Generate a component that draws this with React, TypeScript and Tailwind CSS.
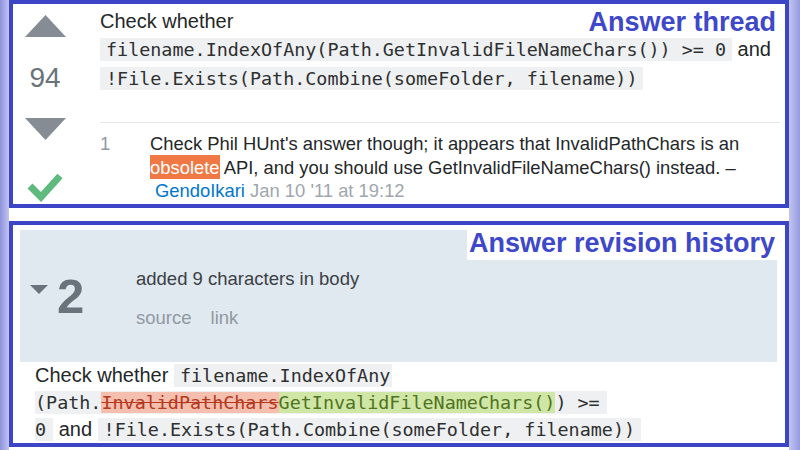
import type { ReactNode } from "react";

function Code({ children, className = "" }: { children: ReactNode; className?: string }) {
  return (
    <code
      className={`bg-[#eff0f1] py-[1px] font-['DejaVu_Sans_Mono',monospace] text-[18.4px] text-[#2d2f31] ${className}`}
    >
      {children}
    </code>
  );
}

function AnswerThread() {
  return (
    <section className="relative flex h-[208px] border-4 border-[#3b45c6]">
      {/* vote column */}
      <div className="flex w-[64px] flex-col items-center pt-[11px]">
        <svg width="41" height="22" viewBox="0 0 41 22">
          <polygon points="20.5,0 41,22 0,22" fill="#858c93" />
        </svg>
        <div className="mt-[27px] text-[28px] leading-[28px] text-[#6a737c]">94</div>
        <svg className="mt-[26px]" width="41" height="22" viewBox="0 0 41 22">
          <polygon points="0,0 41,0 20.5,22" fill="#858c93" />
        </svg>
        <svg className="mt-[30px]" width="36" height="32" viewBox="0 0 36 32">
          <path d="M3 16 L14 27 L33 6" fill="none" stroke="#5eba7d" strokeWidth="7" />
        </svg>
      </div>

      {/* post body */}
      <div className="ml-[23px] flex-1 pr-[5px] pt-[3px]">
        <div className="text-[20px] leading-[28px]">Check whether</div>
        <div className="whitespace-nowrap text-[20px] leading-[28px]">
          <Code className="px-[6px]">filename.IndexOfAny(Path.GetInvalidFileNameChars()) &gt;= 0</Code> and
        </div>
        <div className="whitespace-nowrap text-[20px] leading-[28px]">
          <Code className="px-[6px]">!File.Exists(Path.Combine(someFolder, filename))</Code>
        </div>

        <div className="mt-[29px] h-px bg-[#e4e6e8]" />

        <div className="flex pt-[9px] text-[18.4px] leading-[23.5px]">
          <div className="w-[50px] text-[#9199a1]">1</div>
          <div className="whitespace-nowrap">
            <div>Check Phil HUnt's answer though; it appears that InvalidPathChars is an</div>
            <div>
              <span className="bg-[#f07844] py-[1.5px] text-white">obsolete</span> API, and you should use
              GetInvalidFileNameChars() instead. –
            </div>
            <div className="pl-[5px]">
              <span className="text-[#0077cc]">GendoIkari</span>{" "}
              <span className="text-[#9fa6ad]">Jan 10 '11 at 19:12</span>
            </div>
          </div>
        </div>
      </div>

      <h2 className="absolute right-[9px] top-[5px] text-[27px] font-bold leading-[27px] text-[#3e48c9]">
        Answer thread
      </h2>
    </section>
  );
}

function RevisionHistory() {
  return (
    <section className="relative h-[226px] border-4 border-[#3b45c6] pl-[7px] pr-[8px] pt-[5px]">
      <div className="flex h-[132px] bg-[#e0e8f0]">
        <div className="flex w-[116px] items-center pl-[10px]">
          <svg className="mb-[12px]" width="18" height="10" viewBox="0 0 18 10">
            <polygon points="0,0 18,0 9,9" fill="#6a737c" />
          </svg>
          <span className="ml-[9px] text-[49px] font-bold leading-none text-[#6a737c]">2</span>
        </div>
        <div className="pt-[37px] text-[18.5px] leading-[24px]">
          <div className="text-[#3b4045]">added 9 characters in body</div>
          <div className="mt-[15px] flex gap-[19px] text-[#9199a1]">
            <span>source</span>
            <span>link</span>
          </div>
        </div>
      </div>

      {/* diff of the body */}
      <div className="ml-[15px] whitespace-nowrap text-[20px] leading-[26px]">
        <div>
          Check whether <Code className="pl-[6px] pr-[2px]">filename.IndexOfAny</Code>
        </div>
        <div>
          <Code className="pr-[7px]">
            (Path.
            <del className="bg-[#f4bfae] text-[#b5391f] decoration-[#b5391f]">InvalidPathChars</del>
            <ins className="bg-[#cfe6a6] text-[#4f7320] no-underline">GetInvalidFileNameChars()</ins>) &gt;=
          </Code>
        </div>
        <div>
          <Code className="pr-[7px]">0</Code> and{" "}
          <Code className="px-[6px]">!File.Exists(Path.Combine(someFolder, filename))</Code>
        </div>
      </div>

      <h2 className="absolute right-[8px] top-[5px] h-[30px] bg-white px-[2px] text-[27px] font-bold leading-[26px] text-[#3e48c9]">
        Answer revision history
      </h2>
    </section>
  );
}

export default function App() {
  return (
    <div className="flex h-[450px] w-[800px] overflow-hidden bg-white font-['Liberation_Sans',Arial,sans-serif] text-[#242729]">
      <div className="w-[9px] bg-linear-to-r from-[#8e92dc] to-[#c3c5f0]" />
      <div className="flex flex-1 flex-col">
        <AnswerThread />
        <div className="h-[13px]" />
        <RevisionHistory />
      </div>
      <div className="w-[11px] bg-linear-to-r from-[#c3c5f0] to-[#959ae0]" />
    </div>
  );
}
